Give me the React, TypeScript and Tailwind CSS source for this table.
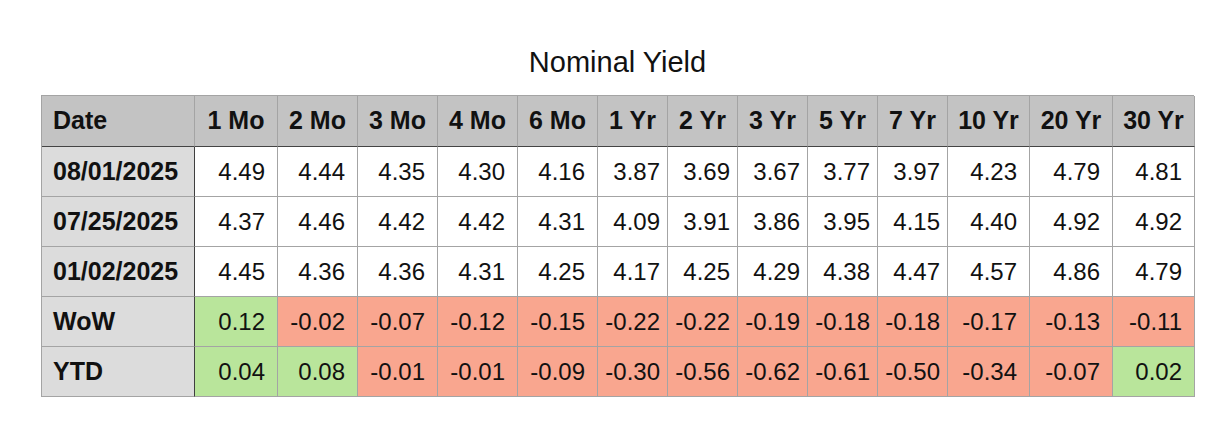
import React from 'react';

const headers = ['Date', '1 Mo', '2 Mo', '3 Mo', '4 Mo', '6 Mo', '1 Yr', '2 Yr', '3 Yr', '5 Yr', '7 Yr', '10 Yr', '20 Yr', '30 Yr'];

// narrow columns (1 Yr .. 7 Yr) get less right padding
const narrow = [false, false, false, false, false, false, true, true, true, true, true, false, false, false];

const rates: [string, string[]][] = [
  ['08/01/2025', ['4.49', '4.44', '4.35', '4.30', '4.16', '3.87', '3.69', '3.67', '3.77', '3.97', '4.23', '4.79', '4.81']],
  ['07/25/2025', ['4.37', '4.46', '4.42', '4.42', '4.31', '4.09', '3.91', '3.86', '3.95', '4.15', '4.40', '4.92', '4.92']],
  ['01/02/2025', ['4.45', '4.36', '4.36', '4.31', '4.25', '4.17', '4.25', '4.29', '4.38', '4.47', '4.57', '4.86', '4.79']],
];

const changes: [string, string[]][] = [
  ['WoW', ['0.12', '-0.02', '-0.07', '-0.12', '-0.15', '-0.22', '-0.22', '-0.19', '-0.18', '-0.18', '-0.17', '-0.13', '-0.11']],
  ['YTD', ['0.04', '0.08', '-0.01', '-0.01', '-0.09', '-0.30', '-0.56', '-0.62', '-0.61', '-0.50', '-0.34', '-0.07', '0.02']],
];

const gridCols =
  'grid grid-cols-[153px_83px_80px_80px_80px_80px_70px_70px_70px_70px_70px_82px_83px_82px]';

const LabelCell = ({ text }: { text: string }) => (
  <div className="h-[50px] flex items-center pl-[11px] bg-[#dcdcdc] border-b border-r border-b-[#a4a4a4] border-r-[#3f3f3f] font-bold text-[25px]">
    {text}
  </div>
);

const ValueCell = ({ value, idx, tint }: { value: string; idx: number; tint?: boolean }) => {
  let bg = 'bg-white';
  if (tint) bg = value.startsWith('-') ? 'bg-[#f9a68f]' : 'bg-[#b9e59b]';
  return (
    <div
      className={`h-[50px] flex items-center justify-end whitespace-nowrap border-b border-r border-[#a4a4a4] text-[24px] ${bg} ${
        narrow[idx + 1] ? 'pr-[7px]' : 'pr-3'
      }`}
    >
      {value}
    </div>
  );
};

export default function App() {
  return (
    <div
      className="w-[1218px] h-[430px] bg-white pl-[41px] pt-[45px] text-[#111]"
      style={{ fontFamily: '"Liberation Sans", Arial, Helvetica, sans-serif' }}
    >
      <div className="w-[1153px]">
        <div className="text-center text-[29px] leading-[34px] mb-[16px]">Nominal Yield</div>

        <div className={`${gridCols} border-t border-l border-[#a4a4a4]`}>
          {headers.map((h, i) => (
            <div
              key={h}
              className={`h-[51px] flex items-center bg-[#c3c3c3] border-r border-b border-r-[#a4a4a4] border-b-[#444] font-bold text-[25px] ${
                i === 0 ? 'pl-[11px]' : 'justify-center'
              }`}
            >
              {h}
            </div>
          ))}

          {rates.map(([date, vals]) => (
            <React.Fragment key={date}>
              <LabelCell text={date} />
              {vals.map((v, i) => (
                <ValueCell key={i} value={v} idx={i} />
              ))}
            </React.Fragment>
          ))}

          {changes.map(([label, vals]) => (
            <React.Fragment key={label}>
              <LabelCell text={label} />
              {vals.map((v, i) => (
                <ValueCell key={i} value={v} idx={i} tint />
              ))}
            </React.Fragment>
          ))}
        </div>
      </div>
    </div>
  );
}
